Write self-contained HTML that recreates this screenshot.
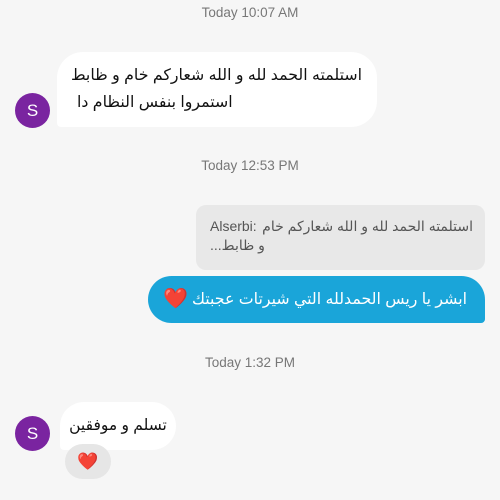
<!DOCTYPE html>
<html><head><meta charset="utf-8"><style>
body{margin:0;width:500px;height:500px;background:#f6f6f6;position:relative;overflow:hidden;font-family:"Liberation Sans","DejaVu Sans",sans-serif}
.ts{position:absolute;left:0;width:500px;text-align:center;color:#777;font-size:13.5px}
.b{position:absolute;box-sizing:border-box;font-size:15px;line-height:27px;color:#111;white-space:nowrap;overflow:hidden}
.r{direction:rtl;text-align:right}
.av{position:absolute;width:35px;height:35px;border-radius:50%;background:#7a24a0;color:#fff;font-size:17px;text-align:center;line-height:35px}
</style></head><body>
<div class="ts" style="top:5px">Today 10:07 AM</div>
<div class="b" style="left:57px;top:52px;width:320px;height:75px;background:#fff;border-radius:26px 26px 26px 4px;padding:10px 15px 0 10px;font-size:15.8px">
<div class="r">استلمته الحمد لله و الله شعاركم خام و ظابط</div>
<div class="r" style="text-align:left;padding-left:10px">استمروا بنفس النظام دا</div></div>
<div class="av" style="left:15px;top:93px">S</div>
<div class="ts" style="top:158px">Today 12:53 PM</div>
<div class="b" style="left:196px;top:205px;width:289px;height:65px;background:#e8e8e8;border-radius:10px;padding:12px 12px 0 14px;font-size:14px;line-height:19px;color:#555">
<div style="display:flex;justify-content:space-between"><span>Alserbi:</span><span style="direction:rtl">استلمته الحمد لله و الله شعاركم خام</span></div>
<div style="direction:rtl;text-align:left">و ظابط...</div></div>
<div class="b" style="left:148px;top:276px;width:337px;height:47px;background:#1aa5d9;border-radius:24px 24px 4px 24px;color:#fff;padding:0 18px 0 15px;display:flex;align-items:center;justify-content:space-between;font-size:15.8px">
<span style="color:#e22;font-size:20px">❤️</span><span style="direction:rtl">ابشر يا ريس الحمدلله التي شيرتات عجبتك</span></div>
<div class="ts" style="top:355px">Today 1:32 PM</div>
<div class="b r" style="left:60px;top:402px;width:116px;height:48px;background:#fff;border-radius:24px 24px 24px 4px;padding:10px 8px 0 8px;text-align:center;font-size:15.5px">تسلم و موفقين</div>
<div class="av" style="left:15px;top:416px">S</div>
<div style="position:absolute;left:65px;top:444px;width:46px;height:35px;background:#e6e6e6;border-radius:18px;text-align:center;line-height:35px;font-size:17px;color:#e22">❤️</div>
</body></html>
